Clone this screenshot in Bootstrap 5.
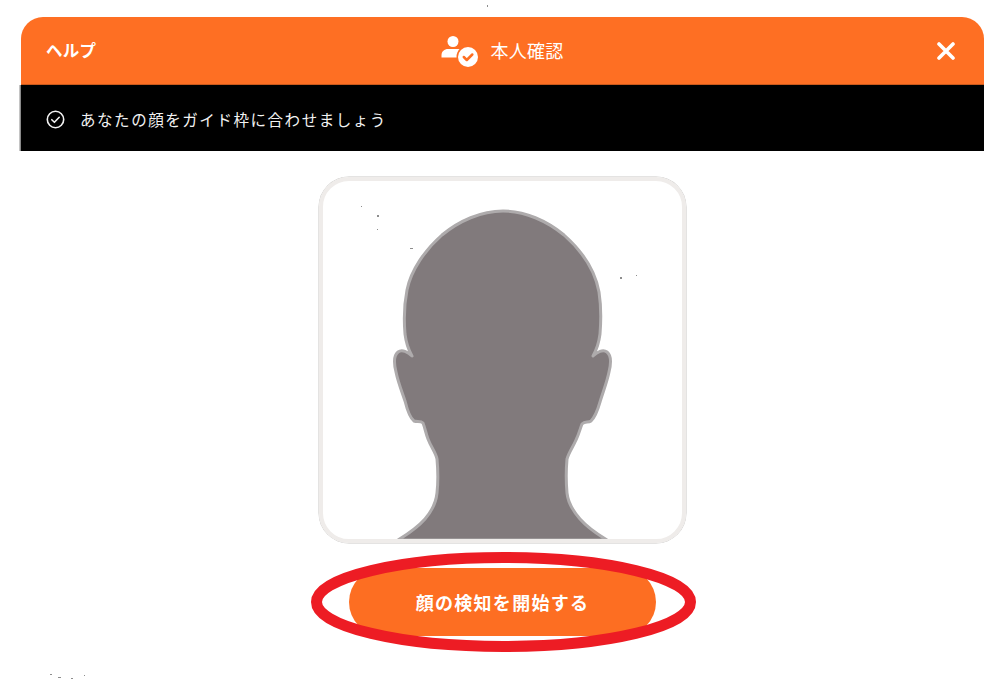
<!DOCTYPE html>
<html lang="ja">
<head>
<meta charset="utf-8">
<title>本人確認</title>
<link href="https://cdn.jsdelivr.net/npm/bootstrap@5.3.0/dist/css/bootstrap.min.css" rel="stylesheet">
<style>
html,body{height:695px;overflow:hidden;background:#fff}
body{font-family:"Noto Sans CJK JP","Liberation Sans",sans-serif;position:relative}
.sheet{width:963px;margin:17px 0 0 21px}
.topbar{height:68px;background:#fe6f23;border-radius:22px 22px 0 0;padding:0 29px 0 25px;color:#fff;border-bottom:1px solid #c9591c}
.side{flex:1 1 0}
.helptext{font-size:16.5px;font-weight:700;letter-spacing:.3px;line-height:1;margin-top:-1px}
.titlegroup{margin-left:4px}
.titletext{font-size:18px;line-height:1;margin-left:12px;letter-spacing:.3px;margin-top:-1px}
.guidebar{height:66px;background:#000;color:#f2f2f2;padding:3px 0 0 25px;box-shadow:-1.5px 0 0 #8a8a8a}
.guidetext{font-size:15.5px;letter-spacing:1.55px;margin-left:15px;line-height:1}
.faceframe{width:367px;height:366px;margin:26px 0 0 298px;border:4px solid #efecea;border-radius:30px;overflow:hidden;box-shadow:0 0 0 .5px #c9c7c5}
.faceframe svg{display:block}
.startwrap{width:307px;height:68px;margin:25px 0 0 328px}
.startbtn{width:307px;height:68px;background:#fd6e22;border:0;color:#fff;font-size:18px;font-weight:700;letter-spacing:1.3px;padding:0}
.startbtn:hover,.startbtn:active{background:#fd6e22!important;color:#fff!important}
.redring{left:-38px;top:-16px;width:385px;height:100px;pointer-events:none;overflow:visible}
.specks{left:0;top:0;pointer-events:none}
</style>
</head>
<body>
<div class="sheet">
  <header class="topbar d-flex align-items-center">
    <div class="side helptext">ヘルプ</div>
    <div class="titlegroup d-flex align-items-center">
      <svg width="37" height="32" viewBox="0 0 37 32" aria-hidden="true">
        <circle cx="12" cy="6.500" r="5.500" fill="#fff"/>
        <path d="M.5 22.500v-2.500c0-3.500 3-6 6.500-6h10c2.500 0 4.500.8 6 2l-6 6.500z" fill="#fff"/>
        <circle cx="27" cy="22" r="11.500" fill="#fe6f23"/>
        <circle cx="27" cy="22" r="10" fill="#fff"/>
        <path d="M22.800 22l3 3 5.500-5.500" fill="none" stroke="#fe6f23" stroke-width="2.500" stroke-linecap="round" stroke-linejoin="round"/>
      </svg>
      <span class="titletext">本人確認</span>
    </div>
    <div class="side d-flex justify-content-end">
      <svg width="18" height="18" viewBox="0 0 18 18" aria-label="閉じる"><path d="M2 2l14 14M16 2L2 16" stroke="#fff" stroke-width="3.600" stroke-linecap="round" fill="none"/></svg>
    </div>
  </header>
  <div class="guidebar d-flex align-items-center">
    <svg width="19" height="19" viewBox="0 0 19 19" aria-hidden="true"><circle cx="9.500" cy="9.500" r="8.200" fill="none" stroke="#f2f2f2" stroke-width="1.600"/><path d="M5.800 9.700l2.600 2.600 4.800-5" fill="none" stroke="#f2f2f2" stroke-width="1.600" stroke-linecap="round" stroke-linejoin="round"/></svg>
    <span class="guidetext">あなたの顔をガイド枠に合わせましょう</span>
  </div>
  <div class="faceframe">
    <svg width="359" height="358" viewBox="323 181 359 358" aria-hidden="true">
      <path d="M503 211C481 211 459 221 442 235C425 250 411 270 407 290C404 305 404 322 405 334C406 342 408 349 412 356C408 352 402 349 398 352C393 356 394 364 396 372C398 382 402 392 405 401C407 409 410 418 414 421C417 422 421 421 423 423C425 428 426 434 428 439C431 447 436 453 437 459C438 470 438 484 437 493C436 503 431 512 425 519C417 528 408 534 398 540L607 540C597 534 588 528 580 519C573 511 568 503 567 493C566 482 566 470 567 459C569 452 573 447 576 440C579 434 580 429 582 424C585 421 588 423 591 421C595 417 598 409 600 402C603 392 607 382 609 372C611 364 612 356 607 352C603 349 597 352 593 356C597 349 599 342 600 334C601 322 601 305 599 292C595 270 581 250 564 235C547 221 525 211 503 211Z" fill="#817a7c" stroke="#aeabac" stroke-width="3" stroke-linejoin="round"/>
    </svg>
  </div>
  <div class="startwrap position-relative">
    <button type="button" class="btn rounded-pill startbtn d-block">顔の検知を開始する</button>
    <svg class="redring position-absolute" viewBox="0 0 385 100" aria-hidden="true"><ellipse cx="192.500" cy="50" rx="187" ry="44.500" fill="none" stroke="#ed1c24" stroke-width="11"/></svg>
  </div>
</div>
<svg class="specks position-absolute" width="1000" height="695" viewBox="0 0 1000 695" aria-hidden="true" fill="#8d8d8d">
  <rect x="487" y="5" width="1" height="2"/><rect x="361" y="206" width="1" height="1"/><rect x="377" y="215" width="2" height="2"/><rect x="377" y="229" width="1" height="1"/><rect x="410" y="248" width="3" height="1"/><rect x="620" y="277" width="2" height="2"/><rect x="636" y="275" width="1" height="1"/><rect x="50" y="674" width="2" height="1"/><rect x="58" y="677" width="3" height="1"/><rect x="71" y="678" width="2" height="1"/><rect x="84" y="675" width="1" height="1"/>
</svg>
</body>
</html>
